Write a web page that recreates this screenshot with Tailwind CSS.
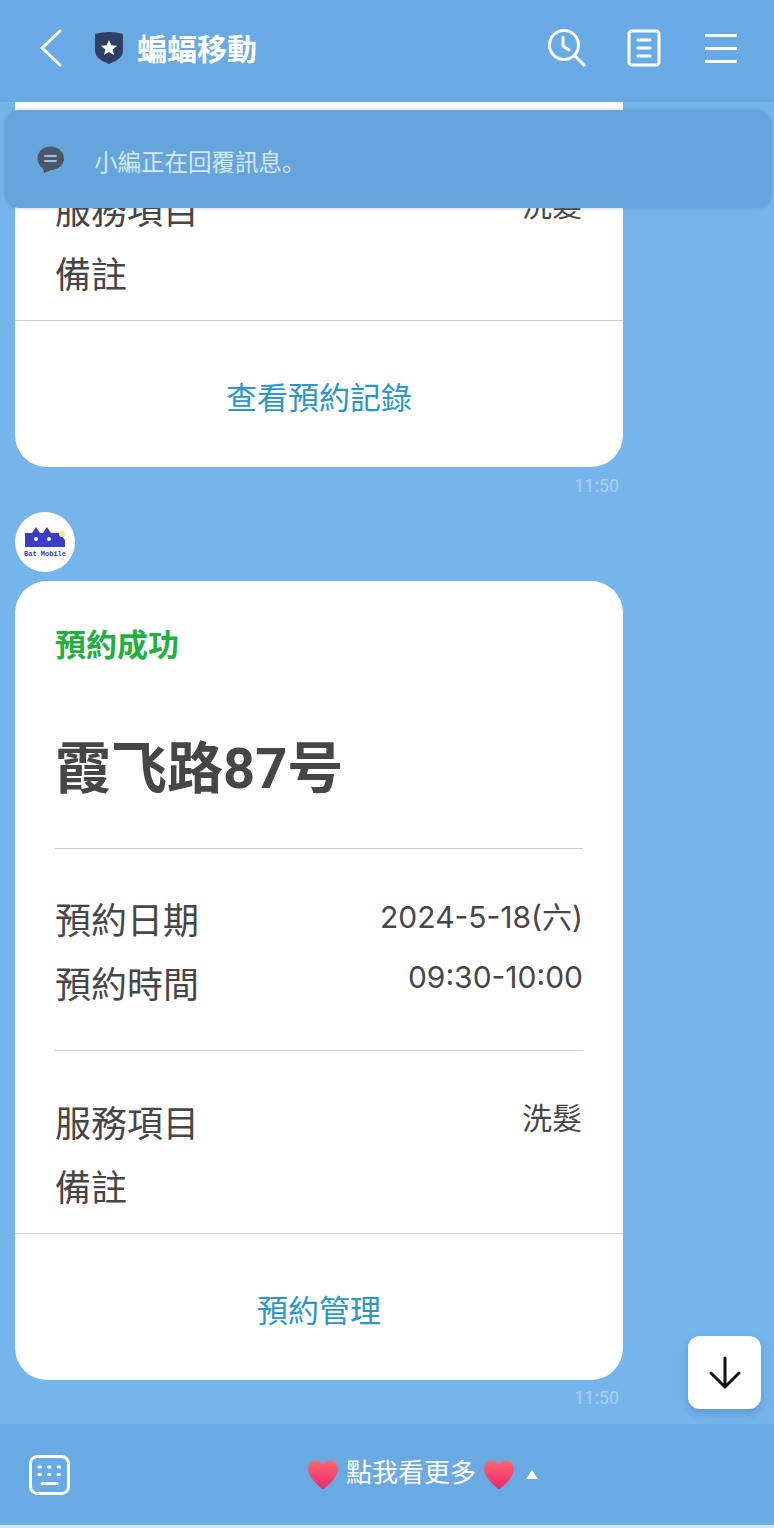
<!DOCTYPE html>
<html lang="zh-Hant">
  <head>
    <meta charset="UTF-8" />
    <meta name="viewport" content="width=device-width, initial-scale=1.0" />
    <title>蝙蝠移動</title>
    <script src="https://cdn.jsdelivr.net/npm/@tailwindcss/browser@4"></script>
  </head>
  <body class="bg-[#75b5ec] font-['Roboto','Noto_Sans_CJK_TC',sans-serif]">
    <div class="relative flex h-[1528px] w-[774px] flex-col overflow-hidden">
      <!-- Header -->
      <header class="flex h-[102px] shrink-0 items-center bg-[#6aaae4] pb-[6px] text-white">
        <svg class="ml-[38px] h-[40px] w-[26px]" viewBox="0 0 26 40" fill="none" stroke="currentColor" stroke-width="3" stroke-linecap="round" stroke-linejoin="round"><path d="M22 3 L4 20 L22 37" /></svg>
        <svg class="ml-[30px] h-[34px] w-[30px]" viewBox="0 0 30 34"><path d="M1 3 Q15 -1 29 3 V20 Q29 28 15 33 Q1 28 1 20 Z" fill="#2f3f63" /><path d="M15 9 L17.300 14.300 L23 14.800 L18.700 18.500 L20 24 L15 21.100 L10 24 L11.300 18.500 L7 14.800 L12.700 14.300 Z" fill="#fff" /></svg>
        <span class="mt-[4px] ml-[13px] text-[30px] leading-none font-bold">蝙蝠移動</span>
        <div class="ml-auto flex items-center">
          <svg class="h-[40px] w-[38px]" viewBox="0 0 38 40" fill="none" stroke="currentColor" stroke-width="3" stroke-linecap="round" stroke-linejoin="round"><circle cx="16" cy="17" r="14.500" /><path d="M15 9 V18 L21 22" /><path d="M27 28 L36 37" /></svg>
          <svg class="ml-[41px] h-[38px] w-[34px]" viewBox="0 0 34 38" fill="none" stroke="currentColor" stroke-width="3" stroke-linecap="round" stroke-linejoin="round"><rect x="2" y="2" width="30" height="34" rx="3" /><path d="M11 11 H23 M11 19 H23 M11 27 H23" /></svg>
          <div class="mr-[37px] ml-[44px] flex h-[29px] w-[32px] flex-col justify-between">
            <div class="h-[3px] bg-white"></div>
            <div class="h-[3px] bg-white"></div>
            <div class="h-[3px] bg-white"></div>
          </div>
        </div>
      </header>

      <!-- Notice -->
      <div class="absolute top-[110px] left-[5px] z-10 flex h-[98px] w-[766px] items-center rounded-[14px] bg-[#66a4de] shadow-[0_0_4px_rgba(60,110,170,0.35)]">
        <svg class="mt-[2px] ml-[31px] h-[30px] w-[30px]" viewBox="0 0 30 30"><path d="M14.500 1.500 C22 1.500 28 6.500 28 13.500 C28 20 22 25 15 25 L8 28 L7 23.500 C3.500 21 1.500 17.500 1.500 13.500 C1.500 6.500 7 1.500 14.500 1.500 Z" fill="#4c5664" /><path d="M9 11 H20 M9 16 H20" stroke="#9cc0e4" stroke-width="2" stroke-linecap="round" /></svg>
        <span lang="zh-Hans" class="mt-[5px] ml-[28px] font-['Noto_Sans_CJK_SC',sans-serif] text-[23.5px] leading-none text-[#d5e8f8]">小編正在回覆訊息。</span>
      </div>

      <!-- Messages -->
      <main class="flex min-h-0 flex-1 flex-col overflow-hidden pl-[15px]">
        <!-- Previous card, its upper part has scrolled away under the header -->
        <div class="w-[608px] shrink-0 overflow-hidden rounded-b-[32px] bg-white text-[#464646]">
          <div class="pt-[78px] pr-[41px] pb-[12px] pl-[40px]">
            <div class="flex h-[64px] justify-between"><span class="text-[36px] leading-[64px]">服務項目</span><span class="text-[30px] leading-[52px]">洗髮</span></div>
            <div class="h-[64px] text-[36px] leading-[64px]">備註</div>
          </div>
          <div class="h-px bg-[#cfcfcf]"></div>
          <div class="flex h-[146px] items-center justify-center pt-[10px] text-[31px] text-[#2b96c9]">查看預約記錄</div>
        </div>
        <p class="mt-[9px] w-[604px] shrink-0 text-right text-[18px] leading-[20px] text-white/40">11:50</p>

        <!-- Avatar -->
        <div class="mt-[16px] flex h-[60px] w-[60px] shrink-0 flex-col items-center justify-center rounded-full bg-white">
          <svg class="h-[20px] w-[42px]" viewBox="0 0 42 20"><path d="M1 20 V6 H8 L12 0 L16 6 H19 L23 0 L27 6 H35 L41 13 V20 Z" fill="#3b3dc9" /><circle cx="12" cy="12" r="2" fill="#fff" /><circle cx="25" cy="12" r="2" fill="#fff" /><circle cx="38" cy="7" r="3" fill="#f7ee6b" /></svg>
          <span class="mt-[3px] font-['Liberation_Mono',monospace] text-[7px] leading-[8px] font-bold text-[#3b3dc9]">Bat Mobile</span>
        </div>

        <div class="mt-[9px] w-[608px] shrink-0 overflow-hidden rounded-[32px] bg-white text-[#464646]">
          <div class="pt-[42px] pr-[41px] pl-[40px]">
            <p class="text-[31px] leading-[46px] font-bold text-[#1fb03f]">預約成功</p>
            <p class="mt-[58px] text-[56px] leading-[84px] font-bold">霞飞路87号</p>
          </div>
          <div class="mx-[40px] mt-[37px] h-px bg-[#cfcfcf]"></div>
          <div class="pt-[41px] pr-[40px] pb-[32px] pl-[40px]">
            <div class="flex h-[64px] justify-between"><span class="text-[36px] leading-[64px]">預約日期</span><span class="font-['Inter','Noto_Sans_CJK_TC',sans-serif] text-[30px] leading-[54px]">2024-5-18(六)</span></div>
            <div class="flex h-[64px] justify-between"><span class="text-[36px] leading-[64px]">預約時間</span><span class="font-['Inter','Noto_Sans_CJK_TC',sans-serif] text-[30px] leading-[46px]">09:30-10:00</span></div>
          </div>
          <div class="mx-[40px] h-px bg-[#cfcfcf]"></div>
          <div class="pt-[42px] pr-[41px] pb-[12px] pl-[40px]">
            <div class="flex h-[64px] justify-between"><span class="text-[36px] leading-[64px]">服務項目</span><span class="text-[30px] leading-[52px]">洗髮</span></div>
            <div class="h-[64px] text-[36px] leading-[64px]">備註</div>
          </div>
          <div class="h-px bg-[#cfcfcf]"></div>
          <div class="flex h-[146px] items-center justify-center pt-[10px] text-[31px] text-[#2b96c9]">預約管理</div>
        </div>
        <p class="mt-[8px] w-[604px] shrink-0 text-right text-[18px] leading-[20px] text-white/40">11:50</p>
      </main>

      <!-- Scroll to bottom -->
      <button class="absolute top-[1336px] left-[688px] flex h-[73px] w-[73px] items-center justify-center rounded-[12px] bg-white shadow-[0_4px_8px_rgba(40,80,130,0.3)]">
        <svg class="h-[34px] w-[32px]" viewBox="0 0 32 34" fill="none" stroke="#111" stroke-width="3" stroke-linecap="round" stroke-linejoin="round"><path d="M16 2 V31 M2 17 L16 31 L30 17" /></svg>
      </button>

      <!-- Footer menu -->
      <footer class="relative flex h-[101px] shrink-0 items-center bg-[#6aaae4] text-white">
        <svg class="ml-[29px] h-[40px] w-[41px]" viewBox="0 0 41 40" fill="none" stroke="currentColor" stroke-linecap="round"><rect x="1.500" y="1.500" width="38" height="37" rx="7" stroke-width="3" /><path d="M10 12 H11.500 M19.500 12 H21 M29 12 H30.500 M10 19.500 H11.500 M19.500 19.500 H21 M29 19.500 H30.500" stroke-width="3" /><path d="M13 28.500 H28" stroke-width="3" /></svg>
        <div class="ml-[237px] flex items-center">
          <svg class="h-[30px] w-[32px]" viewBox="0 0 32 30"><defs><linearGradient id="heart1" x1="0" y1="0" x2="0" y2="1"><stop offset="0" stop-color="#ff6a70" /><stop offset="1" stop-color="#e8246e" /></linearGradient></defs><path d="M16 29.500 C8 23 1 16 1 9 C1 4 4.500 0.500 9 0.500 C12 0.500 14.500 2 16 4.500 C17.500 2 20 0.500 23 0.500 C27.500 0.500 31 4 31 9 C31 16 24 23 16 29.500 Z" fill="url(#heart1)" /></svg>
          <span class="mx-[7px] mb-[4px] text-[26px] leading-none">點我看更多</span>
          <svg class="h-[30px] w-[32px]" viewBox="0 0 32 30"><path d="M16 29.500 C8 23 1 16 1 9 C1 4 4.500 0.500 9 0.500 C12 0.500 14.500 2 16 4.500 C17.500 2 20 0.500 23 0.500 C27.500 0.500 31 4 31 9 C31 16 24 23 16 29.500 Z" fill="url(#heart1)" /></svg>
          <div class="ml-[11px] h-0 w-0 border-x-[6px] border-b-[9px] border-x-transparent border-b-white"></div>
        </div>
      </footer>
      <div class="h-[3px] shrink-0 bg-[#d3e6f7]"></div>
    </div>
  </body>
</html>
